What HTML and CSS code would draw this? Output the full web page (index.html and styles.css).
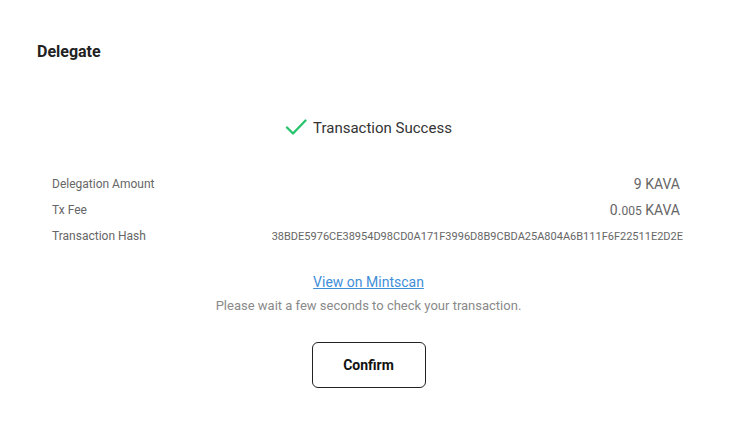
FILE: index.html
```html
<!DOCTYPE html>
<html>
<head>
<meta charset="utf-8">
<link rel="stylesheet" href="styles.css">
</head>
<body>
<div class="modal">
  <h1 class="title">Delegate</h1>
  <div class="status">
    <svg class="check" width="22" height="18" viewBox="0 0 22 18"><path d="M2 9.5 L8 15.5 L20.5 2.5" fill="none" stroke="#2bc46e" stroke-width="2.4" stroke-linecap="round" stroke-linejoin="round"/></svg>
    <span>Transaction Success</span>
  </div>
  <div class="details">
    <div class="row"><span class="label">Delegation Amount</span><span class="value">9 KAVA</span></div>
    <div class="row"><span class="label">Tx Fee</span><span class="value">0.<small>005</small> KAVA</span></div>
    <div class="row"><span class="label">Transaction Hash</span><span class="value hash">38BDE5976CE38954D98CD0A171F3996D8B9CBDA25A804A6B111F6F22511E2D2E</span></div>
  </div>
  <a class="link" href="#">View on Mintscan</a>
  <p class="note">Please wait a few seconds to check your transaction.</p>
  <button class="confirm">Confirm</button>
</div>
</body>
</html>
```
FILE: styles.css
```css
html, body { margin: 0; padding: 0; background: #fff; }
body { font-family: Roboto, "Liberation Sans", sans-serif; color: #333; }
.modal {
  width: 737px; height: 427px; box-sizing: border-box;
  padding: 42px 37px 0 37px;
  display: flex; flex-direction: column; align-items: center;
}
.title {
  align-self: flex-start; margin: 0; font-size: 16px; font-weight: 700;
  color: #222; line-height: 20px;
}
.status {
  margin-top: 57px; display: flex; align-items: center; gap: 6px;
  font-size: 15px; color: #333; line-height: 18px;
}
.check { display: block; margin-top: -2px; }
.details {
  align-self: stretch; margin-top: 39px; padding: 0 20px 0 15px;
  display: flex; flex-direction: column; gap: 10px;
}
.row { display: flex; justify-content: space-between; align-items: center; height: 16px; }
.label { font-size: 12px; color: #666; }
.value { font-size: 14px; color: #666; }
.value small { font-size: 12px; }
.hash { font-size: 11px; margin-right: -3px; letter-spacing: 0; }
.link {
  margin-top: 30px; font-size: 14px; color: #3f8fd8; text-decoration: underline;
  line-height: 16px;
}
.note { margin: 8px 0 0 0; font-size: 13px; color: #8a8a8a; line-height: 16px; }
.confirm {
  margin-top: 28px; width: 114px; height: 46px; box-sizing: border-box;
  border: 1px solid #222; border-radius: 6px; background: #fff;
  font-family: Roboto, "Liberation Sans", sans-serif; font-size: 14px; font-weight: 700; color: #111;
}
```
